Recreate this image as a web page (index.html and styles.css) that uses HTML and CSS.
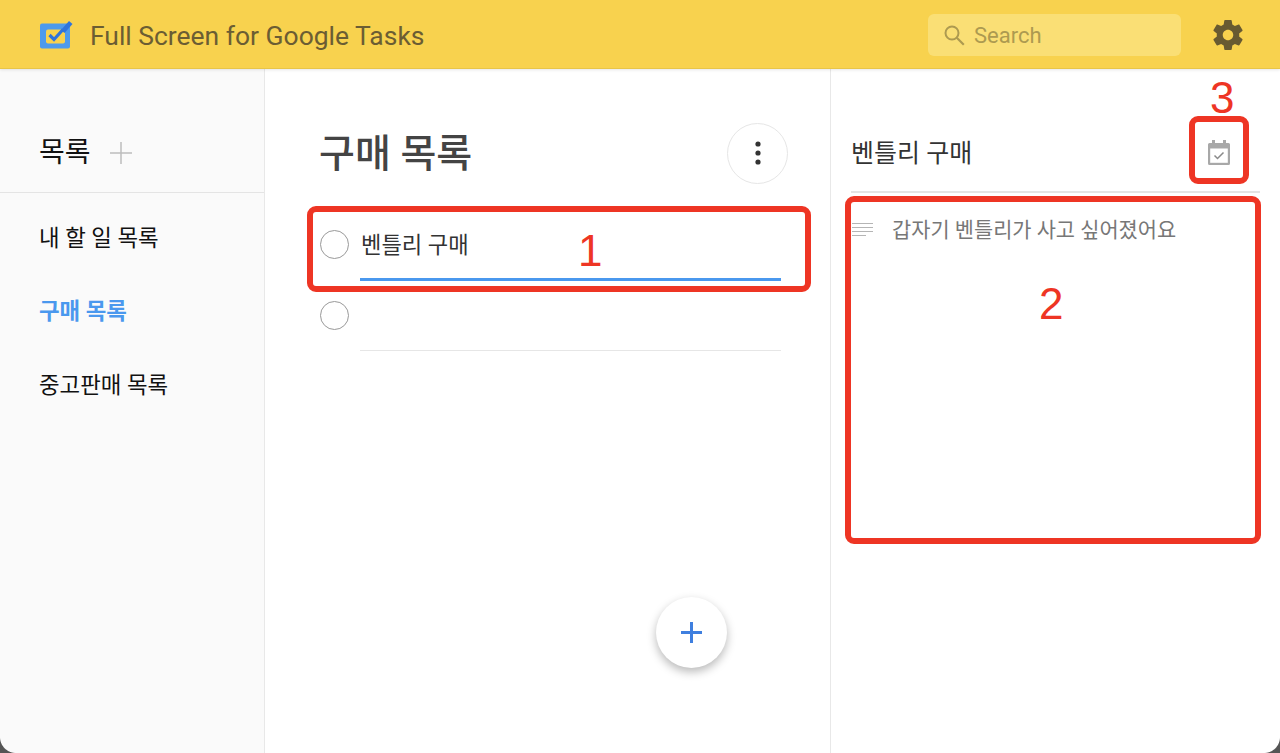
FILE: index.html
```html
<!DOCTYPE html>
<html lang="ko">
<head>
<meta charset="utf-8">
<title>Full Screen for Google Tasks</title>
<link rel="stylesheet" href="styles.css">
</head>
<body>
<div class="app">
  <header class="topbar">
    <svg class="logo" width="34" height="30" viewBox="0 0 34 30">
      <rect x="1" y="4.500" width="30" height="25" rx="2" fill="#4d9aec"/>
      <rect x="7" y="10.500" width="19" height="14" rx="2" fill="#f8d24e"/>
      <path d="M10.500 16l4.500 4.500 9-10" fill="none" stroke="#2f74dc" stroke-width="3.200"/>
      <path d="M22 11l8-9 3.500 3-8 9z" fill="#2f74dc"/>
    </svg>
    <div class="brand">Full Screen for Google Tasks</div>
    <div class="search">
      <svg class="search-icon" width="26" height="26" viewBox="0 0 26 26">
        <circle cx="11" cy="11" r="6.500" fill="none" stroke="#ad9a50" stroke-width="2"/>
        <path d="M15.800 15.800l7 7" stroke="#ad9a50" stroke-width="2.200"/>
      </svg>
      <span class="search-text">Search</span>
    </div>
    <svg class="gear" width="36" height="36" viewBox="0 0 24 24">
      <path fill="#685a31" d="M19.430 12.980c.04-.32.07-.64.07-.98s-.03-.66-.07-.98l2.110-1.650c.19-.15.24-.42.12-.64l-2-3.460c-.12-.22-.39-.3-.61-.22l-2.490 1c-.52-.4-1.080-.73-1.690-.98l-.38-2.650C14.460 2.180 14.250 2 14 2h-4c-.25 0-.46.18-.49.42l-.38 2.650c-.61.25-1.170.59-1.690.98l-2.490-1c-.23-.09-.49 0-.61.22l-2 3.460c-.13.22-.07.49.12.64l2.110 1.650c-.04.32-.07.65-.07.98s.03.66.07.98l-2.110 1.650c-.19.15-.24.42-.12.64l2 3.460c.12.22.39.3.61.22l2.490-1c.52.4 1.080.73 1.690.98l.38 2.650c.03.24.24.42.49.42h4c.25 0 .46-.18.49-.42l.38-2.650c.61-.25 1.170-.59 1.690-.98l2.490 1c.23.09.49 0 .61-.22l2-3.460c.12-.22.07-.49-.12-.64l-2.110-1.650zM12 15.500c-1.930 0-3.500-1.570-3.500-3.500s1.570-3.500 3.500-3.500 3.500 1.570 3.500 3.500-1.570 3.500-3.500 3.500z"/>
    </svg>
  </header>
  <div class="columns">
    <aside class="sidebar">
      <div class="side-head">
        <span class="side-title">목록</span>
        <svg class="side-plus" width="22" height="22" viewBox="0 0 22 22"><path d="M11 0v22M0 11h22" stroke="#bdbdbd" stroke-width="1.500"/></svg>
      </div>
      <nav class="side-list">
        <div class="side-item">내 할 일 목록</div>
        <div class="side-item side-item-active">구매 목록</div>
        <div class="side-item">중고판매 목록</div>
      </nav>
    </aside>
    <main class="main">
      <div class="main-head">
        <h1 class="main-title">구매 목록</h1>
        <div class="more">
          <svg width="8" height="24" viewBox="0 0 8 24"><circle cx="4" cy="3" r="2.600" fill="#333"/><circle cx="4" cy="12" r="2.600" fill="#333"/><circle cx="4" cy="21" r="2.600" fill="#333"/></svg>
        </div>
      </div>
      <div class="task">
        <span class="radio"></span>
        <div class="task-body task-body-active">벤틀리 구매</div>
      </div>
      <div class="task task-empty">
        <span class="radio"></span>
        <div class="task-body"></div>
      </div>
      <div class="fab">
        <svg width="21" height="21" viewBox="0 0 21 21"><path d="M10.500 0v21M0 10.500h21" stroke="#3f7fdf" stroke-width="3"/></svg>
      </div>
    </main>
    <section class="detail">
      <div class="detail-head">
        <span class="detail-title">벤틀리 구매</span>
        <svg class="calendar" width="24" height="26" viewBox="0 0 24 26">
          <path d="M5 1h3v3h8V1h3v3h2.500A1.500 1.500 0 0 1 23 5.500v19a1.500 1.500 0 0 1-1.500 1.500h-19A1.500 1.500 0 0 1 1 24.500v-19A1.500 1.500 0 0 1 2.500 4H5z" fill="#a8a8a8"/>
          <rect x="3.200" y="9.500" width="17.600" height="14.300" fill="#fff"/>
          <path d="M7.500 16.500l3 3 6-6" fill="none" stroke="#8a8a8a" stroke-width="1.500"/>
        </svg>
      </div>
      <div class="note">
        <svg class="note-icon" width="22" height="16" viewBox="0 0 22 16"><path d="M0 1.500h21M0 5.500h21M0 9.500h21M0 13.500h14" stroke="#b5b5b5" stroke-width="1.200"/></svg>
        <span class="note-text">갑자기 벤틀리가 사고 싶어졌어요</span>
      </div>
    </section>
  </div>
  <div class="mark mark-one"></div>
  <div class="mark mark-two"></div>
  <div class="mark mark-three"></div>
  <span class="digit digit-one">1</span>
  <span class="digit digit-two">2</span>
  <span class="digit digit-three">3</span>
  <span class="corner corner-left"></span>
  <span class="corner corner-right"></span>
</div>
</body>
</html>
```
FILE: styles.css
```css
* { box-sizing: border-box; }
html, body { margin: 0; height: 100%; }
body {
  font-family: "Roboto", "Noto Sans CJK KR", sans-serif;
  background: #fff;
  overflow: hidden;
}
.app {
  position: relative;
  width: 1280px;
  height: 753px;
  display: flex;
  flex-direction: column;
  overflow: hidden;
}
.topbar {
  position: relative;
  z-index: 2;
  height: 69px;
  flex: none;
  display: flex;
  align-items: center;
  padding: 0 34px 0 39px;
  background: #f8d24e;
  border-bottom: 1px solid #e8c548;
  box-shadow: 0 1px 3px rgba(0,0,0,.1);
}
.logo { flex: none; margin-top: -1px; margin-right: 17px; }
.brand {
  flex: 1;
  font-size: 26.450px;
  color: #6b5d33;
  margin-top: 3px;
}
.search {
  width: 253px;
  height: 42px;
  margin-top: 2px;
  margin-right: 29px;
  display: flex;
  align-items: center;
  padding-left: 13px;
  gap: 7px;
  border-radius: 6px;
  background: #fadf75;
}
.search-text { font-size: 22px; color: #ad9a50; }
.gear { flex: none; margin-top: 2px; }
.columns { flex: 1; display: flex; min-height: 0; }
.sidebar {
  width: 265px;
  flex: none;
  background: #fafafa;
  border-right: 1px solid #e8e8e8;
}
.side-head {
  height: 124px;
  padding: 66px 0 0 39px;
  display: flex;
  align-items: flex-start;
  gap: 19px;
  border-bottom: 1px solid #e4e4e4;
}
.side-title { font-size: 28px; line-height: 36px; color: #111; }
.side-plus { margin-top: 7px; }
.side-list { padding-top: 6px; }
.side-item {
  height: 73.500px;
  padding-left: 39px;
  display: flex;
  align-items: center;
  font-size: 22.400px;
  color: #111;
}
.side-item-active { color: #4a98ee; font-weight: 700; }
.main {
  position: relative;
  width: 566px;
  flex: none;
  padding: 54px 49px 0 55px;
  border-right: 1px solid #e8e8e8;
}
.main-head {
  display: flex;
  justify-content: space-between;
  align-items: center;
  height: 62px;
  margin-bottom: 29px;
}
.main-title {
  margin: -8px 0 0 -1px;
  font-size: 39px;
  font-weight: 500;
  color: #444;
}
.more {
  width: 61px;
  height: 61px;
  margin: -2px -7px 0 0;
  border: 1px solid #e6e6e6;
  border-radius: 50%;
  display: flex;
  align-items: center;
  justify-content: center;
}
.task {
  display: flex;
  align-items: flex-start;
  gap: 11px;
  height: 71px;
}
.radio {
  width: 29px;
  height: 29px;
  flex: none;
  margin-top: 16px;
  border: 1.500px solid #999;
  border-radius: 50%;
}
.task-body {
  flex: 1;
  height: 66px;
  padding: 15px 0 0 1px;
  font-size: 22.200px;
  line-height: 32px;
  color: #333;
  border-bottom: 1px solid #e6e6e6;
}
.task-body-active { border-bottom: 3px solid #4a98ee; height: 67px; }
.fab {
  position: absolute;
  left: 391px;
  top: 528px;
  width: 71px;
  height: 71px;
  border-radius: 50%;
  background: #fff;
  box-shadow: 0 4px 10px rgba(0,0,0,.28);
  display: flex;
  align-items: center;
  justify-content: center;
}
.detail { flex: 1; padding: 0 20px; }
.detail-head {
  height: 124px;
  padding: 68px 29px 0 0;
  display: flex;
  justify-content: space-between;
  align-items: flex-start;
  border-bottom: 2px solid #e4e4e4;
}
.detail-title { font-size: 25px; line-height: 34px; color: #333; }
.calendar { margin-top: 2px; }
.note {
  display: flex;
  align-items: flex-start;
  gap: 18px;
  padding-top: 21px;
  margin-left: 1px;
}
.note-icon { margin-top: 8px; flex: none; }
.note-text { font-size: 20.870px; line-height: 32px; color: #777; }
.mark {
  position: absolute;
  z-index: 3;
  border: 6px solid #ee3524;
  border-radius: 9px;
}
.mark-one { left: 307px; top: 206px; width: 504px; height: 86px; }
.mark-two { left: 845px; top: 196px; width: 416px; height: 348px; }
.mark-three { left: 1189px; top: 116px; width: 60px; height: 68px; }
.digit {
  position: absolute;
  z-index: 3;
  font-family: "Liberation Sans", sans-serif;
  font-size: 44px;
  line-height: 44px;
  color: #ee3524;
}
.digit-one { left: 578px; top: 229px; }
.digit-two { left: 1039px; top: 282px; }
.digit-three { left: 1210px; top: 76px; }
.corner {
  position: absolute;
  z-index: 3;
  bottom: 0;
  width: 16px;
  height: 16px;
}
.corner-left { left: 0; background: radial-gradient(circle at 16px 0, transparent 15.500px, #555 16.500px); }
.corner-right { right: 0; background: radial-gradient(circle at 0 0, transparent 15.500px, #555 16.500px); }
```
